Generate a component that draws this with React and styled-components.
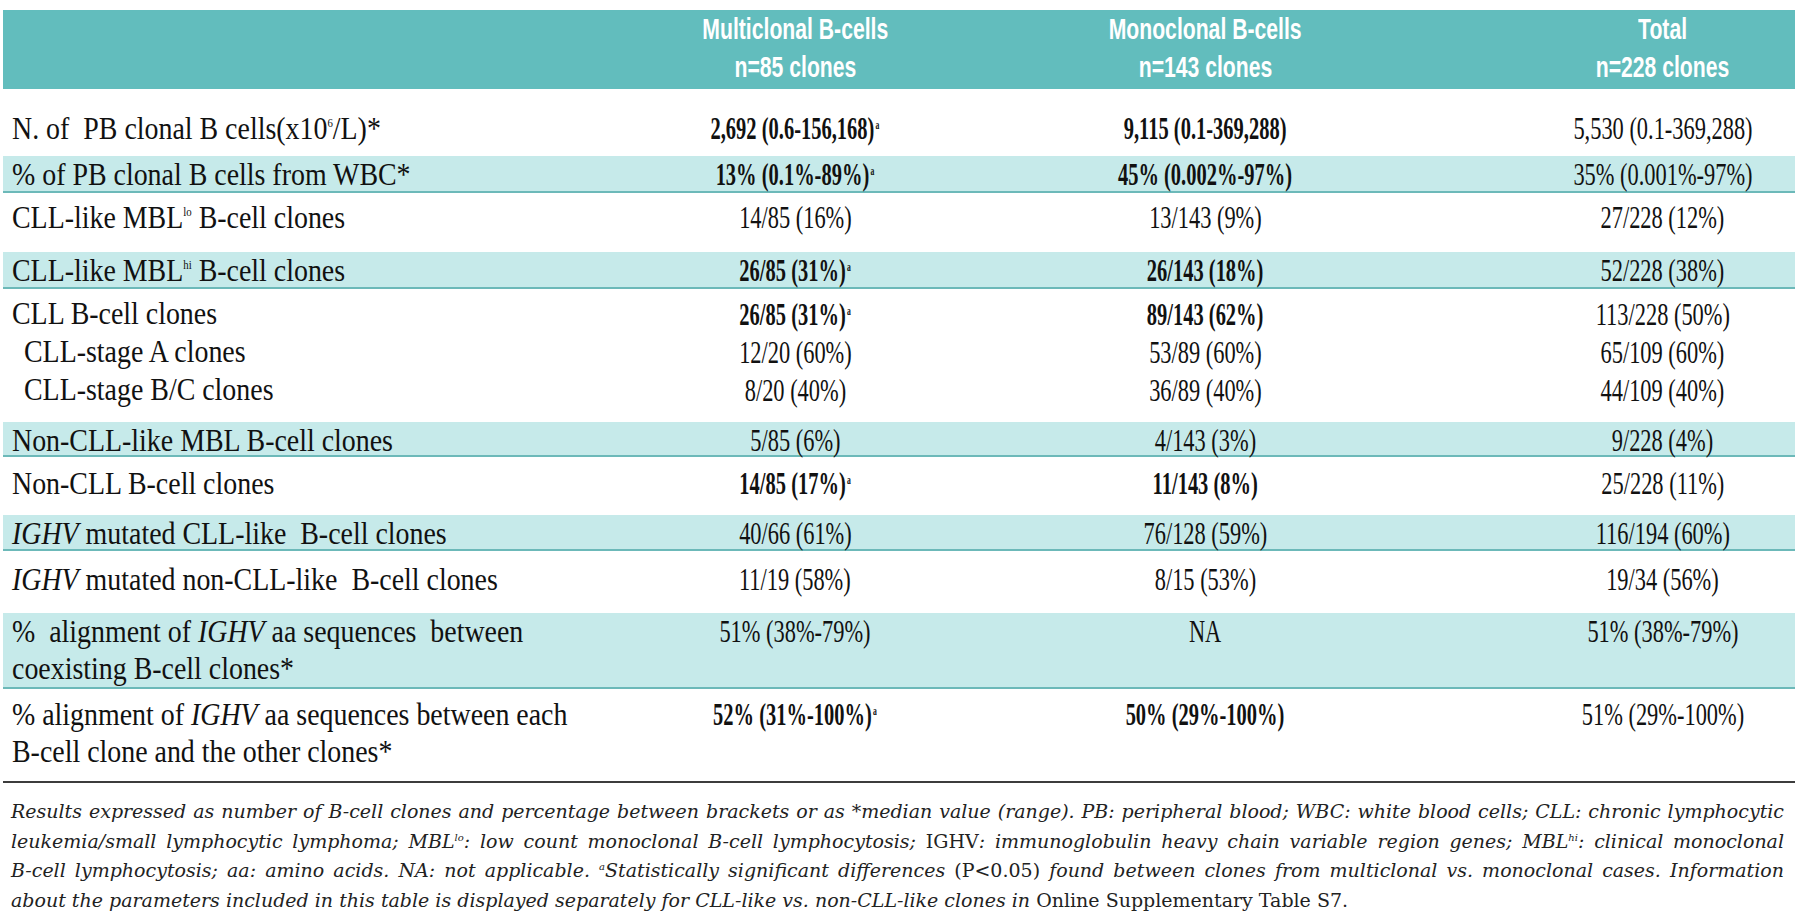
import React from 'react';
import styled, { createGlobalStyle } from 'styled-components';

const Global = createGlobalStyle`
  html, body { margin: 0; padding: 0; background: #ffffff; }
  body {
    width: 1800px;
    height: 912px;
    overflow: hidden;
    font-family: "Liberation Serif", "Times New Roman", serif;
    color: #111111;
  }
`;

const COLS = '587px 410px 410px 385px';

const Page = styled.div`
  padding: 10px 5px 0 3px;
`;

const Table = styled.div`
  width: 1792px;
  display: flex;
  flex-direction: column;
`;

const HeadRow = styled.div`
  display: grid;
  grid-template-columns: ${COLS};
  align-items: center;
  box-sizing: border-box;
  height: 79px;
  padding-bottom: 7px;
  background: #62bdbd;
`;

const HeadCell = styled.div`
  text-align: center;
  color: #ffffff;
  font-family: "Liberation Sans", Arial, sans-serif;
  font-weight: 700;
  font-size: 29px;
  line-height: 38px;
  padding-left: ${(p) => p.$shift || 0}px;
`;

const Squeeze = styled.span`
  display: inline-block;
  white-space: nowrap;
  transform: scaleX(${(p) => p.$x});
  transform-origin: ${(p) => p.$origin || 'center'};
`;

const Row = styled.div`
  display: grid;
  grid-template-columns: ${COLS};
  align-items: ${(p) => (p.$top ? 'start' : 'center')};
  box-sizing: border-box;
  height: ${(p) => p.$h}px;
  padding-top: ${(p) => p.$pt || 0}px;
  padding-bottom: ${(p) => p.$pb || 0}px;
  background: ${(p) => (p.$shade ? '#c6eaea' : 'transparent')};
  border-bottom: ${(p) => (p.$shade ? '2px solid #6cb9b9' : '0')};
`;

const LabelCell = styled.div`
  padding-left: 9px;
  font-size: 31px;
  white-space: nowrap;
`;

const Line = styled.div`
  line-height: ${(p) => p.$lh}px;
  padding-left: ${(p) => (p.$indent ? 12 : 0)}px;
`;

const ValueCell = styled.div`
  text-align: center;
  font-size: 32px;
  padding-left: ${(p) => p.$shift || 0}px;
`;

const ValueText = styled.span`
  display: inline-block;
  white-space: nowrap;
  font-weight: ${(p) => (p.$bold ? 700 : 400)};
  transform: scaleX(${(p) => (p.$bold ? 0.64 : 0.7)});
  transform-origin: center;
`;

const Sup = styled.sup`
  font-size: 12px;
  vertical-align: 12px;
  line-height: 0;
`;

const Mark = styled.sup`
  font-size: 12px;
  vertical-align: 10px;
  line-height: 0;
  margin-left: 2px;
`;

const Ital = styled.i`
  font-style: italic;
`;

const Rule = styled.div`
  width: 1792px;
  height: 2px;
  background: #3c3c3c;
`;

const Notes = styled.div`
  width: 1773px;
  margin: 14px 0 0 8px;
  font-family: "DejaVu Serif", serif;
  font-style: italic;
  font-size: 19px;
  line-height: 29.5px;
  color: #222222;
`;

const NoteLine = styled.div`
  text-align: ${(p) => (p.$last ? 'left' : 'justify')};
  text-align-last: ${(p) => (p.$last ? 'left' : 'justify')};
`;

const Upright = styled.span`
  font-style: normal;
`;

const NoteSup = styled.sup`
  font-size: 10px;
  vertical-align: 7px;
  line-height: 0;
`;

const SHIFTS = [0, 0, 120];

const v = (t, bold = false, mark = false) => ({ t, bold, mark });

const rows = [
  {
    h: 67, pt: 11,
    label: [{ c: <>N. of&nbsp; PB clonal B cells(x10<Sup>6</Sup>/L)*</> }],
    values: [[v('2,692 (0.6-156,168)', true, true)], [v('9,115 (0.1-369,288)', true)], [v('5,530 (0.1-369,288)')]],
  },
  {
    h: 37, shade: true,
    label: [{ c: '% of PB clonal B cells from WBC*' }],
    values: [[v('13% (0.1%-89%)', true, true)], [v('45% (0.002%-97%)', true)], [v('35% (0.001%-97%)')]],
  },
  {
    h: 59, pb: 10,
    label: [{ c: <>CLL-like MBL<Sup>lo</Sup> B-cell clones</> }],
    values: [[v('14/85 (16%)')], [v('13/143 (9%)')], [v('27/228 (12%)')]],
  },
  {
    h: 37, shade: true,
    label: [{ c: <>CLL-like MBL<Sup>hi</Sup> B-cell clones</> }],
    values: [[v('26/85 (31%)', true, true)], [v('26/143 (18%)', true)], [v('52/228 (38%)')]],
  },
  {
    h: 133, lh: 38, pb: 7,
    label: [{ c: 'CLL B-cell clones' }, { c: 'CLL-stage A clones', indent: true }, { c: 'CLL-stage B/C clones', indent: true }],
    values: [
      [v('26/85 (31%)', true, true), v('12/20 (60%)'), v('8/20 (40%)')],
      [v('89/143 (62%)', true), v('53/89 (60%)'), v('36/89 (40%)')],
      [v('113/228 (50%)'), v('65/109 (60%)'), v('44/109 (40%)')],
    ],
  },
  {
    h: 35, shade: true,
    label: [{ c: 'Non-CLL-like MBL B-cell clones' }],
    values: [[v('5/85 (6%)')], [v('4/143 (3%)')], [v('9/228 (4%)')]],
  },
  {
    h: 58, pb: 6,
    label: [{ c: 'Non-CLL B-cell clones' }],
    values: [[v('14/85 (17%)', true, true)], [v('11/143 (8%)', true)], [v('25/228 (11%)')]],
  },
  {
    h: 36, shade: true,
    label: [{ c: <><Ital>IGHV</Ital> mutated CLL-like&nbsp; B-cell clones</> }],
    values: [[v('40/66 (61%)')], [v('76/128 (59%)')], [v('116/194 (60%)')]],
  },
  {
    h: 62, pb: 6,
    label: [{ c: <><Ital>IGHV</Ital> mutated non-CLL-like&nbsp; B-cell clones</> }],
    values: [[v('11/19 (58%)')], [v('8/15 (53%)')], [v('19/34 (56%)')]],
  },
  {
    h: 76, shade: true, top: true, pt: 0,
    label: [{ c: <>%&nbsp; alignment of <Ital>IGHV</Ital> aa sequences&nbsp; between</> }, { c: 'coexisting B-cell clones*' }],
    values: [[v('51% (38%-79%)')], [v('NA')], [v('51% (38%-79%)')]],
  },
  {
    h: 92, top: true, pt: 7,
    label: [{ c: <>% alignment of <Ital>IGHV</Ital> aa sequences between each</> }, { c: 'B-cell clone and the other clones*' }],
    values: [[v('52% (31%-100%)', true, true)], [v('50% (29%-100%)', true)], [v('51% (29%-100%)')]],
  },
];

function DataRow({ row }) {
  const lh = row.lh || 37;
  return (
    <Row $h={row.h} $pt={row.pt} $pb={row.pb} $shade={row.shade} $top={row.top}>
      <LabelCell>
        {row.label.map((l, i) => (
          <Line key={i} $lh={lh} $indent={l.indent}>
            <Squeeze $x={0.9} $origin="left center">{l.c}</Squeeze>
          </Line>
        ))}
      </LabelCell>
      {row.values.map((col, ci) => (
        <ValueCell key={ci} $shift={SHIFTS[ci]}>
          {col.map((val, li) => (
            <Line key={li} $lh={lh}>
              <ValueText $bold={val.bold}>
                {val.t}
                {val.mark && <Mark>a</Mark>}
              </ValueText>
            </Line>
          ))}
        </ValueCell>
      ))}
    </Row>
  );
}

export default function App() {
  return (
    <>
      <Global />
      <Page>
        <Table>
          <HeadRow>
            <div />
            <HeadCell>
              <Squeeze $x={0.73}>Multiclonal B-cells</Squeeze>
              <br />
              <Squeeze $x={0.73}>n=85 clones</Squeeze>
            </HeadCell>
            <HeadCell>
              <Squeeze $x={0.73}>Monoclonal B-cells</Squeeze>
              <br />
              <Squeeze $x={0.73}>n=143 clones</Squeeze>
            </HeadCell>
            <HeadCell $shift={120}>
              <Squeeze $x={0.73}>Total</Squeeze>
              <br />
              <Squeeze $x={0.73}>n=228 clones</Squeeze>
            </HeadCell>
          </HeadRow>
          {rows.map((r, i) => (
            <DataRow key={i} row={r} />
          ))}
          <Rule />
        </Table>
        <Notes>
          <NoteLine>
            Results expressed as number of B-cell clones and percentage between brackets or as *median value (range). PB: peripheral blood; WBC: white blood cells; CLL: chronic lymphocytic
          </NoteLine>
          <NoteLine>
            leukemia/small lymphocytic lymphoma; MBL<NoteSup>lo</NoteSup>: low count monoclonal B-cell lymphocytosis; <Upright>IGHV</Upright>: immunoglobulin heavy chain variable region genes; MBL<NoteSup>hi</NoteSup>: clinical monoclonal
          </NoteLine>
          <NoteLine>
            B-cell lymphocytosis; aa: amino acids. NA: not applicable. <NoteSup>a</NoteSup>Statistically significant differences <Upright>(P&lt;0.05)</Upright> found between clones from multiclonal vs. monoclonal cases. Information
          </NoteLine>
          <NoteLine $last>
            about the parameters included in this table is displayed separately for CLL-like vs. non-CLL-like clones in <Upright>Online Supplementary Table S7.</Upright>
          </NoteLine>
        </Notes>
      </Page>
    </>
  );
}
